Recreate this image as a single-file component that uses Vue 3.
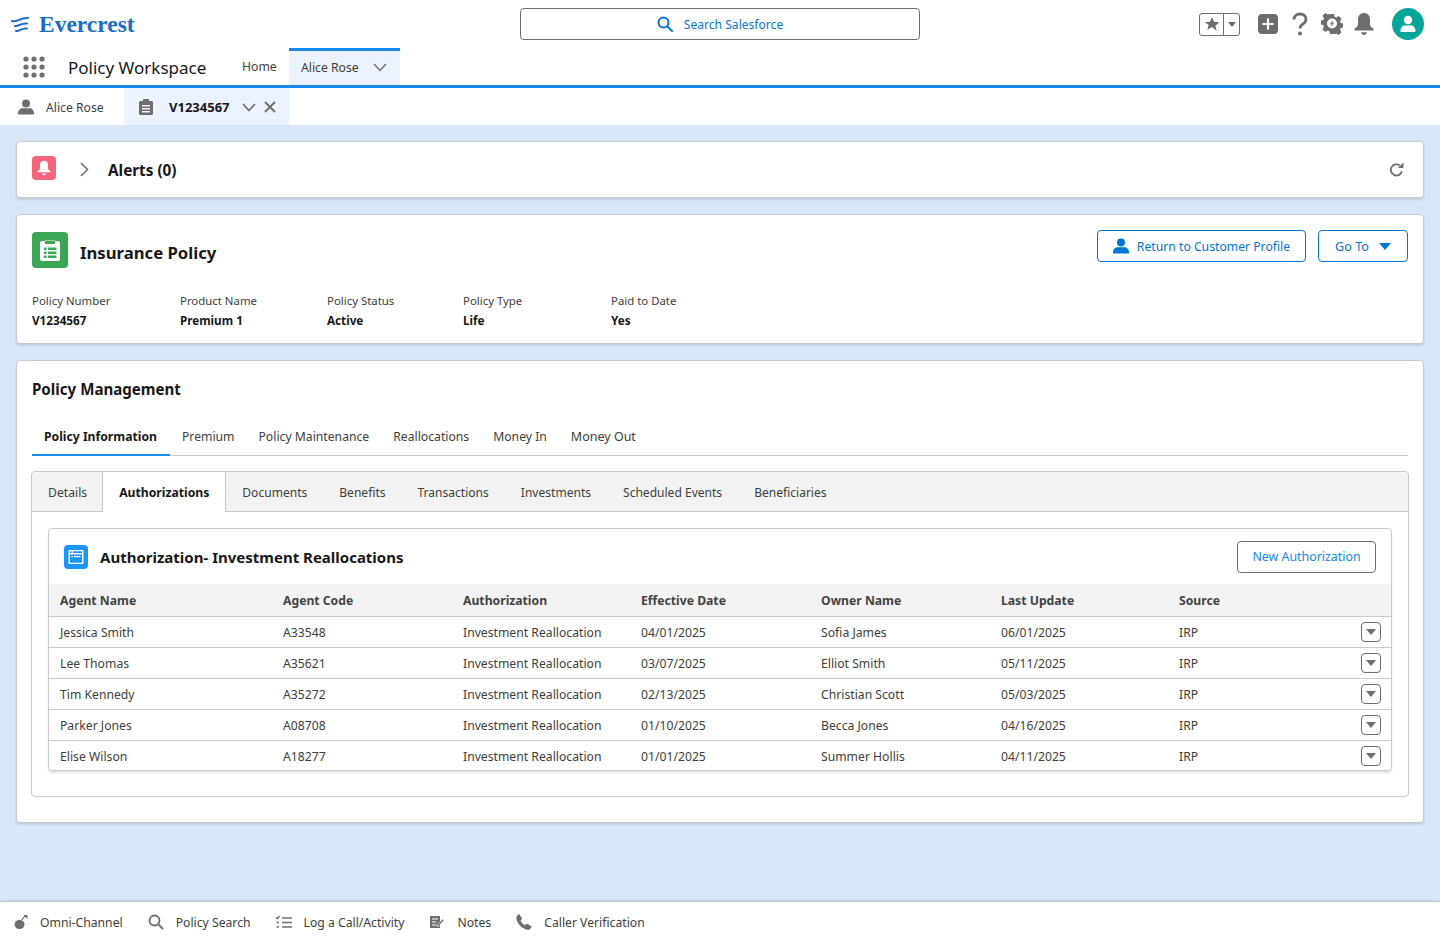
<script setup>
const fields = [
  { label: 'Policy Number', value: 'V1234567', w: 148 },
  { label: 'Product Name', value: 'Premium 1', w: 147 },
  { label: 'Policy Status', value: 'Active', w: 136 },
  { label: 'Policy Type', value: 'Life', w: 148 },
  { label: 'Paid to Date', value: 'Yes', w: 100 },
]
const mainTabs = ['Premium', 'Policy Maintenance', 'Reallocations', 'Money In', 'Money Out']
const subAfter = ['Documents', 'Benefits', 'Transactions', 'Investments', 'Scheduled Events', 'Beneficiaries']
const headers = ['Agent Name', 'Agent Code', 'Authorization', 'Effective Date', 'Owner Name', 'Last Update', 'Source']
const rows = [
  ['Jessica Smith', 'A33548', 'Investment Reallocation', '04/01/2025', 'Sofia James', '06/01/2025', 'IRP'],
  ['Lee Thomas', 'A35621', 'Investment Reallocation', '03/07/2025', 'Elliot Smith', '05/11/2025', 'IRP'],
  ['Tim Kennedy', 'A35272', 'Investment Reallocation', '02/13/2025', 'Christian Scott', '05/03/2025', 'IRP'],
  ['Parker Jones', 'A08708', 'Investment Reallocation', '01/10/2025', 'Becca Jones', '04/16/2025', 'IRP'],
  ['Elise Wilson', 'A18277', 'Investment Reallocation', '01/01/2025', 'Summer Hollis', '04/11/2025', 'IRP'],
]
</script>

<template>
  <div class="page">
    <header class="top">
      <div class="brand">
        <svg width="18" height="18" viewBox="0 0 18 18" fill="none" stroke="#1b6fc2" stroke-width="2" stroke-linecap="round">
          <path d="M1 5C5 7 9 1.500 17 2" />
          <path d="M4 10C7 11 11 6.500 16 7.500" />
          <path d="M5 15C8 16 11 11.500 16 12.500" />
        </svg>
        <span class="brand-name">Evercrest</span>
      </div>
      <div class="search">
        <svg width="16" height="16" viewBox="0 0 16 16" fill="none" stroke="#0b74d6" stroke-width="2">
          <circle cx="6.500" cy="6.500" r="5" />
          <path d="M10.500 10.500L15 15" stroke-linecap="round" />
        </svg>
        <span>Search Salesforce</span>
      </div>
      <div class="top-icons">
        <div class="fav">
          <span class="fav-star">
            <svg width="16" height="16" viewBox="0 0 16 16"><path fill="#706e6b" d="M8 1l2.100 4.800 5.200.5-3.900 3.400 1.200 5.100L8 11.100l-4.600 2.700 1.200-5.100L.7 6.300l5.200-.5z" /></svg>
          </span>
          <span class="fav-down"></span>
        </div>
        <svg class="i-plus" width="20" height="20" viewBox="0 0 20 20">
          <rect width="20" height="20" rx="4" fill="#706e6b" />
          <path d="M10 4.500v11M4.500 10h11" stroke="#fff" stroke-width="2.200" />
        </svg>
        <svg class="i-help" width="16" height="24" viewBox="0 0 16 24" fill="none">
          <path d="M2 7.500C2 4 4.500 2 8 2s6 2 6 5.200c0 2.600-1.500 3.700-3.200 4.900C9.200 13.200 8 14 8 16.500" stroke="#706e6b" stroke-width="2.800" />
          <circle cx="8" cy="21.500" r="2" fill="#706e6b" />
        </svg>
        <svg class="i-gear" width="22" height="22" viewBox="0 0 22 22">
          <path fill="#706e6b" fill-rule="evenodd" d="M9 1h4l.6 2.800 1.700.7 2.400-1.500 2.800 2.800-1.500 2.400.7 1.700 2.300.6v4l-2.300.6-.7 1.700 1.500 2.400-2.800 2.800-2.400-1.500-1.700.7L13 21H9l-.6-2.800-1.700-.7-2.400 1.500-2.800-2.800L3 13.800l-.7-1.700L0 11.500v-4l2.300-.6.700-1.700-1.500-2.400L4.300.1 6.700 1.600l1.700-.7zM11 5.500a5 5 0 100 10 5 5 0 000-10z" />
          <path fill="#706e6b" d="M12 7l-3 4.200h1.700L10 14l3-4.200h-1.700z" />
        </svg>
        <svg class="i-bell" width="24" height="24" viewBox="0 0 22 22">
          <path fill="#706e6b" d="M11 1c3.600 0 5.500 2.700 5.500 6v4c0 2 1 3 3 4.200.8.500.5 1.800-.5 1.800H3c-1 0-1.300-1.300-.5-1.800C4.500 14 5.500 13 5.500 11V7c0-3.300 1.900-6 5.500-6z" />
          <path fill="#706e6b" d="M8.300 18.500h5.400c-.2 1.500-1.300 2.500-2.700 2.500s-2.500-1-2.700-2.500z" />
        </svg>
        <div class="avatar">
          <svg width="20" height="20" viewBox="0 0 20 20" fill="#fff">
            <circle cx="10" cy="6" r="4.200" />
            <path d="M2.500 17c0-3.500 2-5.500 4.500-5.500h6c2.500 0 4.500 2 4.500 5.500 0 .6-.4 1-1 1h-13.500c-.6 0-.5-.4-.5-1z" />
          </svg>
        </div>
      </div>
    </header>

    <nav class="appnav">
      <svg class="waffle" width="22" height="22" viewBox="0 0 22 22" fill="#706e6b">
        <template v-for="y in [3, 11, 19]" :key="y">
          <circle v-for="x in [3, 11, 19]" :key="x" :cx="x" :cy="y" r="2.600" />
        </template>
      </svg>
      <span class="app-name">Policy Workspace</span>
      <span class="nav-home">Home</span>
      <div class="nav-active">
        <span>Alice Rose</span>
        <svg width="14" height="9" viewBox="0 0 14 9" fill="none" stroke="#706e6b" stroke-width="1.500"><path d="M1 1l6 6.500L13 1" /></svg>
      </div>
    </nav>

    <div class="subnav">
      <div class="sub-first">
        <svg width="16" height="16" viewBox="0 0 20 20" fill="#706e6b">
          <circle cx="10" cy="5.500" r="5" />
          <path d="M0 18c0-4 2.500-6.500 6-6.500h8c3.500 0 6 2.500 6 6.500 0 1-.5 1.500-1.500 1.500h-17C.5 19.500 0 19 0 18z" />
        </svg>
        <span>Alice Rose</span>
      </div>
      <div class="sub-active">
        <svg width="14" height="16" viewBox="0 0 14 16" fill="#706e6b">
          <path fill-rule="evenodd" d="M4 0h6v2h2.500c.8 0 1.500.7 1.500 1.500v11c0 .8-.7 1.500-1.500 1.500h-11C.7 16 0 15.300 0 14.500v-11C0 2.700.7 2 1.500 2H4zM3 6v1.500h8V6zM3 9v1.500h8V9zM3 12v1.500h8V12z" />
        </svg>
        <b>V1234567</b>
        <svg class="sub-chev" width="14" height="9" viewBox="0 0 14 9" fill="none" stroke="#706e6b" stroke-width="1.700"><path d="M1 1l6 6.500L13 1" /></svg>
        <svg width="12" height="12" viewBox="0 0 12 12" fill="none" stroke="#706e6b" stroke-width="1.800"><path d="M1 1l10 10M11 1L1 11" /></svg>
      </div>
    </div>

    <main class="main">
      <section class="card alerts">
        <div class="bell-tile">
          <svg width="16" height="16" viewBox="0 0 22 22" fill="#fff">
            <path d="M11 1c3.600 0 5.500 2.700 5.500 6v4c0 2 1 3 3 4.200.8.500.5 1.800-.5 1.800H3c-1 0-1.300-1.300-.5-1.800C4.500 14 5.500 13 5.500 11V7c0-3.300 1.900-6 5.500-6z" />
            <path d="M8.300 18.500h5.400c-.2 1.500-1.300 2.500-2.700 2.500s-2.500-1-2.700-2.500z" />
          </svg>
        </div>
        <svg class="alert-chev" width="9" height="15" viewBox="0 0 9 15" fill="none" stroke="#706e6b" stroke-width="1.500"><path d="M1 1l6.500 6.500L1 14" /></svg>
        <h2 class="alert-title">Alerts (0)</h2>
        <svg class="refresh" width="15" height="15" viewBox="0 0 14 14" fill="none">
          <path d="M12 8.500A5.200 5.200 0 1110.200 3.400" stroke="#706e6b" stroke-width="1.700" />
          <path d="M13.500.5v5.200H8.300z" fill="#706e6b" />
        </svg>
      </section>

      <section class="card policy">
        <div class="policy-head">
          <div class="green-tile">
            <svg width="22" height="24" viewBox="0 0 22 24">
              <path fill="#fff" fill-rule="evenodd" d="M6.500 2.500h9V3h3.500c1 0 2 1 2 2v16c0 1-1 2-2 2H3c-1 0-2-1-2-2V5c0-1 1-2 2-2h3.500zM7 2h8c.6 0 1 .5 1 1v2c0 .6-.4 1-1 1H7c-.6 0-1-.4-1-1V3c0-.5.4-1 1-1zM5 9.500V12h2.500V9.500zM9 9.500V12h8.500V9.500zM5 13.500V16h2.500v-2.500zM9 13.500V16h8.500v-2.500zM5 17.500V20h2.500v-2.500zM9 17.500V20h8.500v-2.500z" />
            </svg>
          </div>
          <h2 class="policy-title">Insurance Policy</h2>
          <div class="policy-actions">
            <button class="btn btn-blue ret">
              <svg width="16" height="16" viewBox="0 0 20 20" fill="#0176d3">
                <circle cx="10" cy="5.500" r="5" />
                <path d="M0 18c0-4 2.500-6.500 6-6.500h8c3.500 0 6 2.500 6 6.500 0 1-.5 1.500-1.500 1.500h-17C.5 19.500 0 19 0 18z" />
              </svg>
              Return to Customer Profile
            </button>
            <button class="btn btn-blue goto">
              Go To
              <span class="blue-tri"></span>
            </button>
          </div>
        </div>
        <div class="fields">
          <div v-for="f in fields" :key="f.label" class="field" :style="{ width: f.w + 'px' }">
            <div class="f-label">{{ f.label }}</div>
            <div class="f-value">{{ f.value }}</div>
          </div>
        </div>
      </section>

      <section class="card mgmt">
        <h2 class="mgmt-title">Policy Management</h2>
        <div class="main-tabs">
          <span class="mt active">Policy Information</span>
          <span v-for="t in mainTabs" :key="t" class="mt">{{ t }}</span>
        </div>
        <div class="tabset">
          <div class="subtabs">
            <span class="st first">Details</span>
            <span class="st on">Authorizations</span>
            <span v-for="t in subAfter" :key="t" class="st">{{ t }}</span>
          </div>
          <div class="tabbody">
            <div class="tablecard">
              <div class="tc-head">
                <div class="blue-tile">
                  <svg width="16" height="16" viewBox="0 0 16 16">
                    <path fill="#fff" fill-rule="evenodd" d="M1.500 1h13c.5 0 1 .5 1 1v12c0 .5-.5 1-1 1h-13c-.5 0-1-.5-1-1V2c0-.5.5-1 1-1zM2 2.300v1.700h1.500V2.300zM5 2.300v1.700h9V2.300zM2 5.500V13.700h12V5.500zM3.300 7h1.500v1.200H3.300zM6 7h6.500v1.200H6z" />
                  </svg>
                </div>
                <h3 class="tc-title">Authorization- Investment Reallocations</h3>
                <button class="btn new-auth">New Authorization</button>
              </div>
              <div class="row hdr">
                <span v-for="h in headers" :key="h" class="cell">{{ h }}</span>
              </div>
              <div v-for="r in rows" :key="r[0]" class="row">
                <span v-for="(c, i) in r" :key="i" class="cell">{{ c }}</span>
                <span class="menu-btn"><i></i></span>
              </div>
            </div>
          </div>
        </div>
      </section>
    </main>

    <footer class="util">
      <div class="u-item">
        <svg width="14" height="16" viewBox="0 0 14 16" fill="#706e6b">
          <ellipse cx="5.500" cy="10.500" rx="5" ry="4.500" />
          <path d="M8 6c1-2 2-3.500 3.500-4" fill="none" stroke="#706e6b" stroke-width="1.300" />
          <path d="M9.500 1h4v4z" />
        </svg>
        <span>Omni-Channel</span>
      </div>
      <div class="u-item">
        <svg width="16" height="16" viewBox="0 0 16 16" fill="none" stroke="#706e6b" stroke-width="1.800">
          <circle cx="6.500" cy="6.500" r="5" /><path d="M10.500 10.500L15 15" />
        </svg>
        <span>Policy Search</span>
      </div>
      <div class="u-item">
        <svg width="16" height="14" viewBox="0 0 16 14" fill="none" stroke="#706e6b" stroke-width="1.500">
          <path d="M6 3h10M6 7.500h10M6 12h10M0 2.500l1.200 1.200L3.500 1M.5 7.500h2.500M.5 12h2.500" />
        </svg>
        <span>Log a Call/Activity</span>
      </div>
      <div class="u-item">
        <svg width="16" height="14" viewBox="0 0 16 14" fill="none">
          <path d="M1 1h10v12H1z" fill="#706e6b" />
          <path d="M3 4h6M3 7h4M3 10h4" stroke="#fff" stroke-width="1.200" />
          <path d="M8 10l5.500-6 1.500 1.300-5.500 6H8z" fill="#706e6b" stroke="#fff" stroke-width=".6" />
        </svg>
        <span>Notes</span>
      </div>
      <div class="u-item">
        <svg width="16" height="16" viewBox="0 0 16 16" fill="#706e6b">
          <path d="M3.500.5L5.800 4c.3.500.2 1-.2 1.400L4.500 6.500c.8 2 2.500 3.700 4.500 4.800l1.200-1.200c.4-.4 1-.5 1.400-.2l3.500 2.300c.5.300.6 1 .2 1.400l-1.600 1.600c-.6.600-1.400.8-2.200.6C6 14.500 1.500 10 .3 4.400.1 3.600.3 2.800.9 2.200L2.200.4c.4-.3 1-.3 1.300.1z" />
        </svg>
        <span>Caller Verification</span>
      </div>
    </footer>
  </div>
</template>

<style scoped>
.page {
  width: 1440px;
  height: 942px;
  display: flex;
  flex-direction: column;
  overflow: hidden;
  background: #d8e8f8;
  color: #181818;
  font-family: "Noto Sans", "Open Sans", sans-serif;
  font-size: 12px;
}
h2, h3 { margin: 0; }
.top {
  height: 48px;
  flex: none;
  background: #fff;
  display: flex;
  align-items: center;
  position: relative;
  padding-left: 11px;
}
.brand { display: flex; align-items: center; gap: 10px; margin-top: 1px; }
.brand-name {
  font-family: "Liberation Serif", serif;
  font-weight: 700;
  font-size: 23.500px;
  color: #1b6fc2;
}
.search {
  position: absolute;
  left: 520px;
  top: 8px;
  width: 400px;
  height: 32px;
  box-sizing: border-box;
  border: 1px solid #706e6b;
  border-radius: 4px;
  display: flex;
  align-items: center;
  justify-content: center;
  gap: 11px;
  color: #0b74d6;
  font-size: 12.100px;
}
.top-icons {
  margin-left: auto;
  display: flex;
  align-items: center;
  padding-right: 16px;
}
.fav {
  width: 41px;
  height: 23px;
  box-sizing: border-box;
  border: 1px solid #706e6b;
  border-radius: 3px;
  display: flex;
  margin-right: 18px;
}
.fav-star {
  width: 23px;
  display: flex;
  align-items: center;
  justify-content: center;
  border-right: 1px solid #706e6b;
}
.fav-down {
  width: 0;
  height: 0;
  margin: 8px 0 0 4px;
  border-left: 4px solid transparent;
  border-right: 4px solid transparent;
  border-top: 5px solid #706e6b;
}
.i-help { margin-left: 14px; }
.i-gear { margin-left: 13px; }
.i-bell { margin-left: 9px; }
.avatar {
  width: 32px;
  height: 32px;
  margin-left: 16px;
  border-radius: 50%;
  background: #06a59a;
  display: flex;
  align-items: center;
  justify-content: center;
}
.appnav {
  height: 40px;
  flex: none;
  background: #fff;
  display: flex;
  align-items: center;
  border-bottom: 3px solid #1589ee;
  box-sizing: border-box;
}
.waffle { margin-left: 23px; }
.app-name {
  margin-left: 23px;
  font-size: 17px;
  margin-top: 1px;
  color: #181818;
  width: 174px;
}
.nav-home { font-size: 12.200px; color: #3e3e3c; width: 47px; }
.nav-active {
  height: 37px;
  width: 111px;
  box-sizing: border-box;
  background: #ebf3fe;
  border-top: 3px solid #1589ee;
  display: flex;
  align-items: center;
  padding-left: 12px;
  gap: 14px;
  padding-bottom: 2px;
  font-size: 12.200px;
  color: #3e3e3c;
}
.subnav {
  height: 37px;
  flex: none;
  background: #fff;
  display: flex;
  align-items: center;
}
.sub-first {
  width: 124px;
  height: 37px;
  display: flex;
  align-items: center;
  gap: 12px;
  padding: 1px 0 0 18px;
  box-sizing: border-box;
  font-size: 12.200px;
  color: #3e3e3c;
}
.sub-active {
  width: 165px;
  height: 37px;
  background: #ebf3fe;
  display: flex;
  align-items: center;
  padding: 1px 0 0 15px;
  box-sizing: border-box;
  font-size: 13px;
}
.sub-active b { margin-left: 16px; font-weight: 700; color: #181818; }
.sub-chev { margin-left: 12px; margin-right: 8px; }
.main {
  flex: 1;
  padding: 16px 16px 0;
  display: flex;
  flex-direction: column;
  gap: 16px;
  min-height: 0;
}
.card {
  background: #fff;
  border: 1px solid #c9c9c9;
  border-radius: 4px;
  box-shadow: 0 2px 2px rgba(0, 0, 0, .1);
  box-sizing: border-box;
}
.alerts {
  height: 57px;
  flex: none;
  display: flex;
  align-items: center;
  padding: 0 19px 0 15px;
}
.bell-tile {
  width: 24px;
  height: 24px;
  border-radius: 4px;
  background: #f7647e;
  display: flex;
  align-items: center;
  justify-content: center;
  margin-top: -3px;
}
.alert-chev { margin-left: 24px; }
.alert-title { margin-left: 19px; font-size: 15.300px; font-weight: 700; color: #181818; }
.refresh { margin-left: auto; }
.policy {
  height: 130px;
  flex: none;
  padding: 17px 15px 0;
}
.policy-head { display: flex; align-items: center; height: 36px; }
.green-tile {
  width: 36px;
  height: 36px;
  border-radius: 4px;
  background: #3ba755;
  display: flex;
  align-items: center;
  justify-content: center;
}
.policy-title { margin: 4px 0 0 12px; font-size: 16.700px; font-weight: 700; color: #181818; }
.policy-actions { margin-left: auto; display: flex; gap: 12px; margin-top: -8px; }
.btn {
  font-family: inherit;
  background: #fff;
  height: 32px;
  box-sizing: border-box;
  border-radius: 4px;
  font-size: 12.200px;
  display: flex;
  align-items: center;
  padding: 0;
  justify-content: center;
}
.btn-blue { border: 1px solid #0176d3; color: #0176d3; }
.ret { width: 209px; gap: 8px; }
.goto { width: 90px; gap: 10px; font-size: 12.600px; }
.blue-tri {
  width: 0;
  height: 0;
  border-left: 6.500px solid transparent;
  border-right: 6.500px solid transparent;
  border-top: 7px solid #0176d3;
}
.fields { display: flex; margin-top: 25px; }
.f-label { font-size: 11.400px; color: #3e3e3c; line-height: 16px; }
.f-value { font-size: 11.700px; font-weight: 700; color: #181818; line-height: 16px; margin-top: 3px; }
.mgmt {
  height: 463px;
  flex: none;
  padding: 18px 15px 0;
}
.mgmt-title { font-size: 15.100px; font-weight: 700; line-height: 20px; }
.main-tabs {
  margin-top: 21px;
  height: 36px;
  display: flex;
  border-bottom: 1px solid #c9c9c9;
  box-sizing: border-box;
}
.mt {
  padding: 0 12px;
  line-height: 33px;
  font-size: 12.200px;
  color: #3e3e3c;
  height: 35px;
  box-sizing: border-box;
}
.mt:last-child { font-size: 12.500px; }
.mt.active {
  font-weight: 700;
  color: #181818;
  border-bottom: 2px solid #1589ee;
  height: 36px;
  padding-right: 13px;
}
.tabset {
  margin: 15px -1px 0;
  height: 326px;
  box-sizing: border-box;
  border: 1px solid #c9c9c9;
  border-radius: 4px;
}
.subtabs {
  height: 40px;
  display: flex;
  background: #f3f3f3;
  border-radius: 4px 4px 0 0;
  border-bottom: 1px solid #c9c9c9;
  box-sizing: border-box;
}
.st {
  padding: 0 16px;
  line-height: 42px;
  font-size: 12.050px;
  color: #3e3e3c;
}
.st.first { border-right: 1px solid #c9c9c9; padding: 0 15px 0 16px; font-size: 12.200px; }
.st.on {
  background: #fff;
  font-weight: 700;
  color: #181818;
  height: 40px;
  border-right: 1px solid #c9c9c9;
  font-size: 12.200px;
}
.tabbody { padding: 16px 16px 0; }
.tablecard {
  border: 1px solid #c9c9c9;
  border-radius: 4px;
  box-shadow: 0 2px 2px rgba(0, 0, 0, .1);
  height: 243px;
  box-sizing: border-box;
}
.tc-head { height: 55px; display: flex; align-items: center; padding: 0 15px; }
.blue-tile {
  width: 24px;
  height: 24px;
  border-radius: 4px;
  background: #1b96ff;
  display: flex;
  align-items: center;
  justify-content: center;
}
.tc-title { margin-left: 12px; font-size: 15px; font-weight: 700; color: #181818; }
.new-auth {
  margin-left: auto;
  width: 139px;
  border: 1px solid #706e6b;
  color: #1589ee;
  font-size: 12.400px;
}
.row {
  display: grid;
  grid-template-columns: 223px 180px 178px 180px 180px 178px 1fr;
  padding-left: 11px;
  height: 31px;
  align-items: center;
  border-bottom: 1px solid #c9c9c9;
  box-sizing: border-box;
  position: relative;
  font-size: 12.200px;
  color: #3e3e3c;
}
.row:last-child { border-bottom: none; }
.row.hdr {
  height: 33px;
  background: #f3f3f3;
  font-weight: 700;
  color: #444;
}
.menu-btn {
  position: absolute;
  right: 10px;
  top: 5px;
  width: 20px;
  height: 20px;
  box-sizing: border-box;
  border: 1px solid #706e6b;
  border-radius: 4px;
  display: flex;
  align-items: center;
  justify-content: center;
}
.menu-btn i {
  width: 0;
  height: 0;
  border-left: 5px solid transparent;
  border-right: 5px solid transparent;
  border-top: 6px solid #706e6b;
}
.util {
  height: 40px;
  flex: none;
  background: #fff;
  box-shadow: 0 -1px 2px rgba(0, 0, 0, .2);
  display: flex;
  align-items: center;
  padding-left: 14px;
  gap: 25px;
  font-size: 12.200px;
  color: #3e3e3c;
}
.u-item { display: flex; align-items: center; gap: 12px; }
</style>
